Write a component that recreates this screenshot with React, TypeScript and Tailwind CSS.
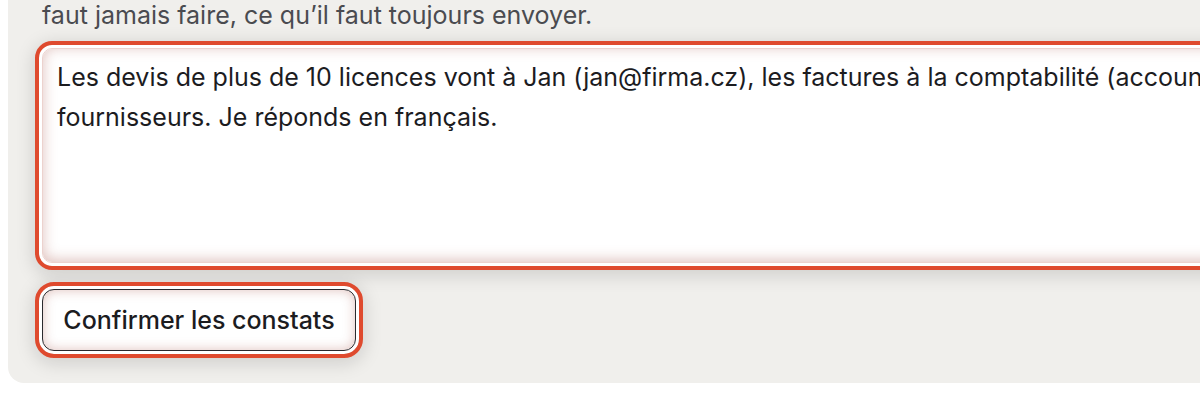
import { useState } from "react";

const NOTE =
  "Les devis de plus de 10 licences vont à Jan (jan@firma.cz), les factures à la comptabilité (accounting@firma.cz), jamais de remises aux nouveaux\nfournisseurs. Je réponds en français.";

export default function App() {
  const [value, setValue] = useState(NOTE);

  return (
    <div className="h-[400px] w-[1200px] overflow-hidden bg-white font-['Inter','Noto_Sans',sans-serif]">
      <div className="-mt-[3px] ml-2 w-[2000px] rounded-b-2xl bg-[#f0efec] pl-[34px] pb-8">
        <p className="text-[25px] leading-[37.5px] text-[#4a4b50]">
          faut jamais faire, ce qu’il faut toujours envoyer.
        </p>

        <textarea
          value={value}
          onChange={(e) => setValue(e.target.value)}
          spellCheck={false}
          className="mt-[13px] block h-[215px] w-[1900px] resize-none overflow-hidden whitespace-pre-wrap rounded-[10px] border border-[#ecd2ce] bg-white px-[14px] pt-2 text-[25px] leading-[40px] text-[#1c1c1f] outline-4 outline-offset-[3px] outline-solid outline-[#df4a2e] shadow-[inset_0_-2px_14px_rgba(160,70,60,0.34),0_0_0_3px_#ffffff,0_4px_18px_9px_rgba(0,0,0,0.13)]"
        />

        <button
          type="button"
          className="mt-[26px] block h-[62px] w-[314px] rounded-[12px] border border-[#2a2a2e] bg-white pt-[2px] text-[25px] font-medium text-[#1c1c1f] outline-4 outline-offset-[3px] outline-solid outline-[#df4a2e] shadow-[inset_0_0_12px_rgba(160,70,60,0.34),0_0_0_3px_#ffffff,0_4px_18px_9px_rgba(0,0,0,0.13)]"
        >
          Confirmer les constats
        </button>
      </div>
    </div>
  );
}
